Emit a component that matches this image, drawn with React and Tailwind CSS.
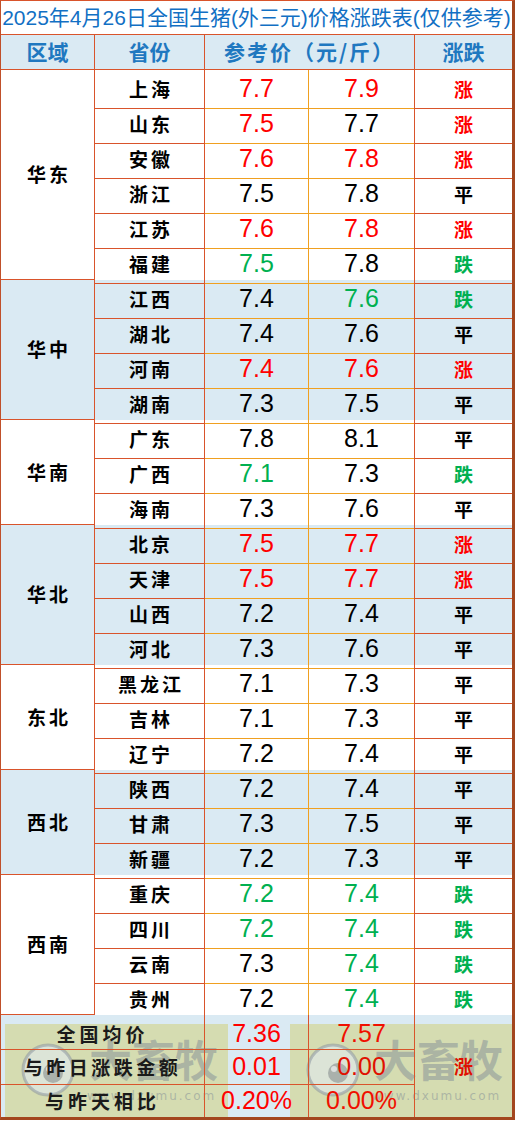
import React from "react";

const R = "text-[#ff0000]";
const G = "text-[#00b050]";
const K = "text-black";

const groups = [
  { name: "华东", blue: false, rows: [
    ["上海", "7.7", R, "7.9", R, "涨"],
    ["山东", "7.5", R, "7.7", K, "涨"],
    ["安徽", "7.6", R, "7.8", R, "涨"],
    ["浙江", "7.5", K, "7.8", K, "平"],
    ["江苏", "7.6", R, "7.8", R, "涨"],
    ["福建", "7.5", G, "7.8", K, "跌"],
  ]},
  { name: "华中", blue: true, rows: [
    ["江西", "7.4", K, "7.6", G, "跌"],
    ["湖北", "7.4", K, "7.6", K, "平"],
    ["河南", "7.4", R, "7.6", R, "涨"],
    ["湖南", "7.3", K, "7.5", K, "平"],
  ]},
  { name: "华南", blue: false, rows: [
    ["广东", "7.8", K, "8.1", K, "平"],
    ["广西", "7.1", G, "7.3", K, "跌"],
    ["海南", "7.3", K, "7.6", K, "平"],
  ]},
  { name: "华北", blue: true, rows: [
    ["北京", "7.5", R, "7.7", R, "涨"],
    ["天津", "7.5", R, "7.7", R, "涨"],
    ["山西", "7.2", K, "7.4", K, "平"],
    ["河北", "7.3", K, "7.6", K, "平"],
  ]},
  { name: "东北", blue: false, rows: [
    ["黑龙江", "7.1", K, "7.3", K, "平"],
    ["吉林", "7.1", K, "7.3", K, "平"],
    ["辽宁", "7.2", K, "7.4", K, "平"],
  ]},
  { name: "西北", blue: true, rows: [
    ["陕西", "7.2", K, "7.4", K, "平"],
    ["甘肃", "7.3", K, "7.5", K, "平"],
    ["新疆", "7.2", K, "7.3", K, "平"],
  ]},
  { name: "西南", blue: false, rows: [
    ["重庆", "7.2", G, "7.4", G, "跌"],
    ["四川", "7.2", G, "7.4", G, "跌"],
    ["云南", "7.3", K, "7.4", G, "跌"],
    ["贵州", "7.2", K, "7.4", G, "跌"],
  ]},
];

const cjk = "font-['Noto_Sans_CJK_SC',sans-serif]";
const num = "font-['Liberation_Sans','Noto_Sans_CJK_SC',sans-serif]";

function changeColor(c) {
  if (c === "涨") return "text-[#ff0000]";
  if (c === "跌") return "text-[#00b050]";
  return "text-black";
}

function Row({ r }) {
  const [prov, p1, c1, p2, c2, ch] = r;
  return (
    <div className="grid grid-cols-[110px_104px_106px_97px] h-[35px]">
      <div className={`flex items-center justify-center border-r border-b border-[#d9542b] ${cjk} font-bold text-[19px] tracking-[3px] pl-[3px] text-black`}>{prov}</div>
      <div className={`flex items-center justify-center border-r border-r-[#f0a020] border-b border-b-[#f0a020] ${num} text-[25px] ${c1}`}>{p1}</div>
      <div className={`flex items-center justify-center border-r border-r-[#d9542b] border-b border-b-[#f0a020] ${num} text-[25px] ${c2}`}>{p2}</div>
      <div className={`flex items-center justify-center border-b border-[#d9542b] ${cjk} font-bold text-[19px] ${changeColor(ch)}`}>{ch}</div>
    </div>
  );
}

function Group({ g }) {
  return (
    <div className={`flex ${g.blue ? "bg-[#daeaf3]" : "bg-white"}`}>
      <div className={`w-[94px] flex items-center justify-center border-r border-b border-[#d9542b] ${cjk} font-bold text-[19px] tracking-[3px] pl-[3px] text-black`}>{g.name}</div>
      <div className="flex flex-col">
        {g.rows.map((r) => <Row key={r[0]} r={r} />)}
      </div>
    </div>
  );
}

function Watermark({ className }) {
  return (
    <div className={`absolute pointer-events-none bg-[rgba(206,200,77,0.4)] ${className}`}>
      <div className="relative w-full h-full">
        <svg className="absolute left-[15px] top-[18px]" width="56" height="56" viewBox="0 0 56 56">
          <circle cx="28" cy="28" r="25" fill="rgba(225,235,245,0.55)" stroke="rgba(140,150,160,0.55)" strokeWidth="3" />
          <circle cx="33" cy="31" r="10" fill="rgba(120,125,130,0.5)" />
          <circle cx="29" cy="27" r="3" fill="rgba(255,255,255,0.6)" />
        </svg>
        <div className={`absolute left-[84px] top-[13px] whitespace-nowrap ${cjk} font-bold text-[43px] leading-none tracking-[0px] text-[rgba(130,140,150,0.5)]`}>大畜牧</div>
        <div className={`absolute left-[82px] top-[66px] whitespace-nowrap font-['DejaVu_Sans',sans-serif] text-[12px] leading-none tracking-[2px] text-[rgba(130,140,150,0.5)]`}>www.dxumu.com</div>
      </div>
    </div>
  );
}

export default function App() {
  return (
    <div className="w-[515px] h-[1121px] bg-white">
      <div className="w-[515px] border-l border-l-[#c0502a] border-t border-t-[#d9542b] border-r-[3px] border-r-[#a3461e] border-b-[3px] border-b-[#a3461e]">
        <div className={`h-[34px] flex items-center justify-center border-b border-[#d9542b] ${num} text-[21px] text-[#1270c4] whitespace-nowrap`}>
          2025年4月26日全国生猪(外三元)价格涨跌表(仅供参考)
        </div>
        <div className={`grid grid-cols-[94px_110px_210px_97px] h-[35px] bg-[#daeaf3] ${cjk} font-bold text-[21px] text-[#1f78c0]`}>
          <div className="flex items-center justify-center border-r border-b border-[#d9542b]">区域</div>
          <div className="flex items-center justify-center border-r border-b border-[#d9542b]">省份</div>
          <div className="flex items-center justify-center border-r border-b border-[#d9542b] tracking-[2px]">参考价（元/斤）</div>
          <div className="flex items-center justify-center border-b border-[#d9542b]">涨跌</div>
        </div>
        {groups.map((g) => <Group key={g.name} g={g} />)}
        <div className="relative bg-[#daeaf3]">
          <Watermark className="left-[4px] top-[9px] w-[223px] h-[93px]" />
          <Watermark className="left-[289px] top-[9px] w-[222px] h-[93px]" />
          <div className="relative grid grid-cols-[204px_104px_106px_97px] grid-rows-[35px_35px_32px]">
            <div className={`flex items-center justify-center border-r border-b border-[#d9542b] ${cjk} font-bold text-[19px] tracking-[4px] text-[#1a1a1a] pt-[4px]`}>全国均价</div>
            <div className={`flex items-center justify-center border-r border-b border-[#d9542b] ${num} text-[25px] text-[#ff0000] pt-[4px]`}>7.36</div>
            <div className={`flex items-center justify-center border-r border-b border-[#d9542b] ${num} text-[25px] text-[#f01000] pt-[4px]`}>7.57</div>
            <div className={`row-span-3 flex items-center justify-center ${cjk} font-bold text-[19px] text-[#e01000]`}>涨</div>
            <div className={`flex items-center justify-center border-r border-b border-[#d9542b] ${cjk} font-bold text-[19px] tracking-[3.5px] text-[#1a1a1a]`}>与昨日涨跌金额</div>
            <div className={`flex items-center justify-center border-r border-b border-[#d9542b] ${num} text-[25px] text-[#ff0000]`}>0.01</div>
            <div className={`flex items-center justify-center border-r border-b border-[#d9542b] ${num} text-[25px] text-[#e01000]`}>0.00</div>
            <div className={`flex items-center justify-center border-r border-[#d9542b] ${cjk} font-bold text-[19px] tracking-[4px] text-[#1a1a1a]`}>与昨天相比</div>
            <div className={`flex items-center justify-center border-r border-[#d9542b] ${num} text-[25px] text-[#ff0000]`}>0.20%</div>
            <div className={`flex items-center justify-center border-r border-[#d9542b] ${num} text-[25px] text-[#f01000]`}>0.00%</div>
          </div>
        </div>
      </div>
    </div>
  );
}
